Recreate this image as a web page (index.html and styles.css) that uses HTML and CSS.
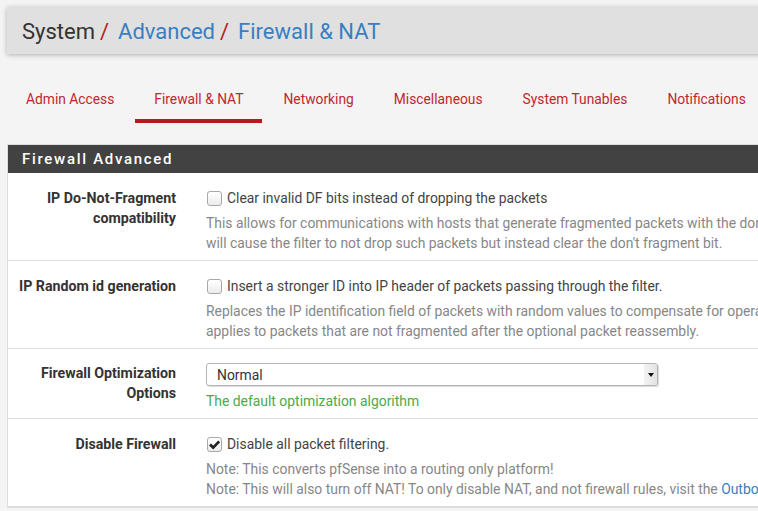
FILE: index.html
```html
<!DOCTYPE html>
<html>
<head>
<meta charset="utf-8">
<link rel="stylesheet" href="styles.css">
</head>
<body>
<div class="page">
  <div class="crumb">
    <span class="crumb-root">System</span><span class="sep">/</span>
    <a class="crumb-link">Advanced</a><span class="sep">/</span>
    <a class="crumb-link">Firewall &amp; NAT</a>
  </div>

  <ul class="tabs">
    <li><a>Admin Access</a></li>
    <li class="active"><a>Firewall &amp; NAT</a></li>
    <li><a>Networking</a></li>
    <li><a>Miscellaneous</a></li>
    <li><a>System Tunables</a></li>
    <li><a>Notifications</a></li>
  </ul>

  <div class="panel">
    <div class="panel-heading">Firewall Advanced</div>
    <div class="panel-body">
      <div class="row">
        <div class="label">IP Do-Not-Fragment compatibility</div>
        <div class="field">
          <div class="check"><span class="box"></span>Clear invalid DF bits instead of dropping the packets</div>
          <div class="help">This allows for communications with hosts that generate fragmented packets with the don't fragment (DF) bit set. Linux NFS is known to do this. This<br>will cause the filter to not drop such packets but instead clear the don't fragment bit.</div>
        </div>
      </div>
      <div class="row">
        <div class="label">IP Random id generation</div>
        <div class="field">
          <div class="check"><span class="box"></span>Insert a stronger ID into IP header of packets passing through the filter.</div>
          <div class="help">Replaces the IP identification field of packets with random values to compensate for operating systems that use predictable values. This option only<br>applies to packets that are not fragmented after the optional packet reassembly.</div>
        </div>
      </div>
      <div class="row row-select">
        <div class="label">Firewall Optimization Options</div>
        <div class="field">
          <div class="select"><span class="select-text">Normal</span><span class="select-arrow"><svg width="6" height="4" viewBox="0 0 6 4"><path d="M0 0H6L3 4Z" fill="#111"/></svg></span></div>
          <div class="help help-ok">The default optimization algorithm</div>
        </div>
      </div>
      <div class="row">
        <div class="label">Disable Firewall</div>
        <div class="field">
          <div class="check"><span class="box checked"><svg width="13" height="13" viewBox="0 0 13 13"><path d="M2 6.4 L5.2 9.6 L11.2 3.4" fill="none" stroke="#222" stroke-width="2.8" stroke-linejoin="miter"/></svg></span>Disable all packet filtering.</div>
          <div class="help">Note: This converts pfSense into a routing only platform!<br>Note: This will also turn off NAT! To only disable NAT, and not firewall rules, visit the <a class="link">Outbound NAT</a> page.</div>
        </div>
      </div>
    </div>
  </div>
</div>
</body>
</html>
```

FILE: styles.css
```css
html, body {
  margin: 0;
  padding: 0;
  background: #f4f4f4;
  overflow: hidden;
}
body {
  font-family: Roboto, "Liberation Sans", sans-serif;
  font-size: 13.8px;
  line-height: 20px;
  color: #333;
}
.page {
  width: 1300px;
  padding: 7px 0 0 7px;
}
.crumb {
  height: 47px;
  background: #e0e0e0;
  box-shadow: 0 1px 5px rgba(0, 0, 0, 0.28);
  display: flex;
  align-items: center;
  padding-left: 15px;
  padding-top: 2px;
  font-size: 22px;
  line-height: 28px;
  box-sizing: border-box;
}
.crumb-root {
  color: #333;
}
.sep {
  color: #b71c1c;
  margin: 0 9px 0 5px;
}
.crumb-link {
  color: #3a7ec0;
}
.tabs {
  list-style: none;
  display: flex;
  margin: 24px 0 0 0;
  padding: 0;
}
.tabs li {
  margin-right: 2px;
}
.tabs a {
  display: block;
  padding: 11px 19px 10px;
  border-bottom: 4px solid transparent;
  color: #c1272d;
  line-height: 20px;
}
.tabs li.active a {
  border-bottom-color: #b71c1c;
}
.panel {
  margin-top: 21px;
  border: 1px solid #ddd;
  border-right: none;
  background: #fff;
}
.panel-heading {
  background: #424242;
  color: #fff;
  height: 28px;
  line-height: 29px;
  padding-left: 14px;
  font-size: 15px;
  font-weight: 500;
  letter-spacing: 1.7px;
}
.row {
  display: grid;
  grid-template-columns: 183px 1fr;
  border-bottom: 1px solid #ddd;
  padding: 15px 0 7px;
}
.row-select {
  padding: 14px 0 7px;
}
.label {
  text-align: right;
  padding-right: 15px;
  font-weight: 700;
  font-size: 14.2px;
  color: #333;
}
.field {
  padding-left: 15px;
  font-size: 13.9px;
}
.check {
  display: flex;
  align-items: center;
  color: #444;
  white-space: nowrap;
}
.box {
  width: 13px;
  height: 13px;
  border: 1px solid #a9a9a9;
  border-radius: 3px;
  background: linear-gradient(#fff, #ececec);
  margin: 0 5px 0 1px;
  display: flex;
  align-items: center;
  justify-content: center;
  box-sizing: content-box;
}
.help {
  margin-top: 5px;
  color: #878787;
  white-space: nowrap;
}
.help-ok {
  color: #4aab4a;
}
.link {
  color: #3a7ec0;
}
.select {
  width: 452px;
  height: 23px;
  box-sizing: border-box;
  border: 1px solid #b4b4b4;
  border-radius: 3px;
  background: #fff;
  display: flex;
  align-items: center;
  justify-content: space-between;
  box-shadow: 1px 1px 1px rgba(0, 0, 0, 0.15);
}
.select-text {
  padding-left: 10px;
  color: #333;
}
.select-arrow {
  width: 13px;
  height: 21px;
  background: linear-gradient(to right, #f3f3f3, #e2e2e2);
  display: flex;
  align-items: center;
  justify-content: center;
  border-radius: 0 2px 2px 0;
}
```
